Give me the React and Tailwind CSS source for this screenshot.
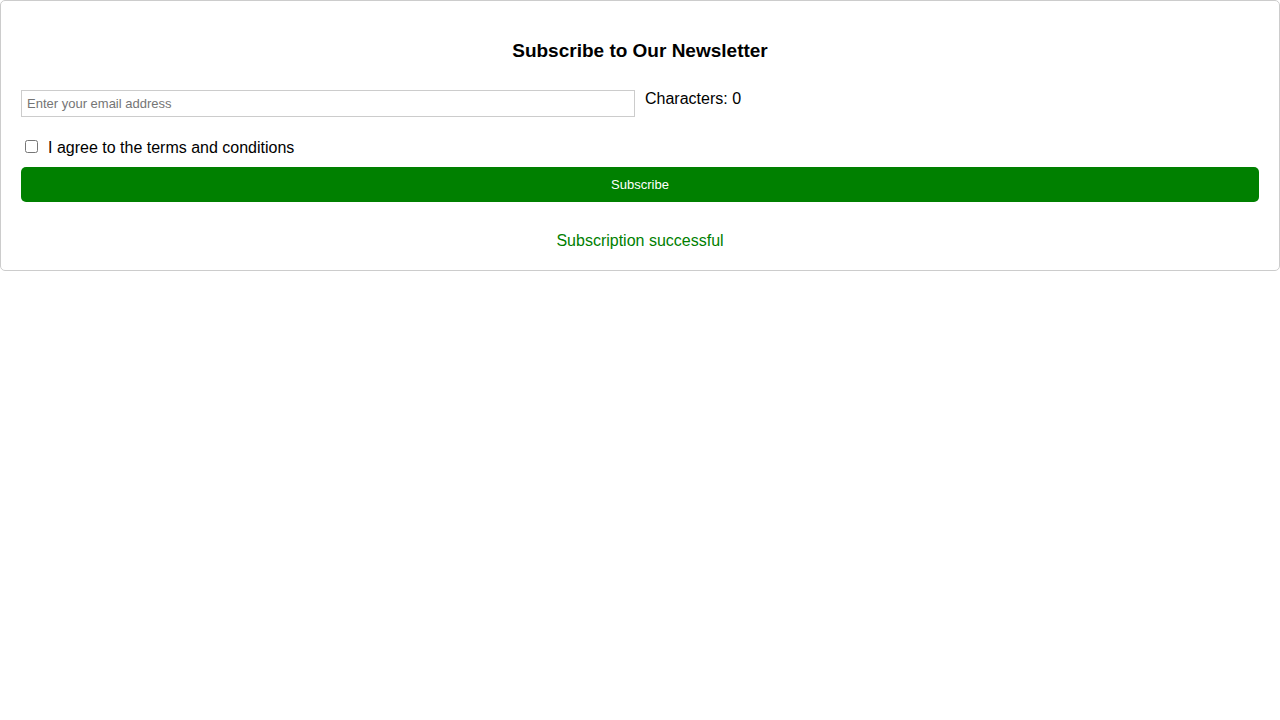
import { useState } from "react";

export default function App() {
  const [email, setEmail] = useState("");
  const [agreed, setAgreed] = useState(false);

  return (
    <form
      className="flex flex-col rounded-[5px] border border-[#cccccc] p-5 font-['Liberation_Sans',Arial,sans-serif] text-base leading-[18px] text-black"
      onSubmit={(event) => event.preventDefault()}
    >
      <h3 className="mt-[19px] mb-[29px] text-center text-[19px] leading-[21px] font-bold">
        Subscribe to Our Newsletter
      </h3>
      <div className="mb-5 grid grid-cols-2 items-start gap-2.5">
        <input
          type="email"
          aria-label="Email address"
          placeholder="Enter your email address"
          value={email}
          onChange={(event) => setEmail(event.target.value)}
          className="min-w-0 border border-[#cccccc] p-[5px] text-[13px] leading-[15px] placeholder:text-[#757575]"
        />
        <span>Characters: {email.length}</span>
      </div>
      <div className="mb-2.5 flex items-baseline gap-2.5 pl-1">
        <input
          id="terms"
          type="checkbox"
          checked={agreed}
          onChange={(event) => setAgreed(event.target.checked)}
          className="my-[3px] size-[13px]"
        />
        <label htmlFor="terms">I agree to the terms and conditions</label>
      </div>
      <button
        type="submit"
        className="rounded-[5px] bg-[#008000] p-2.5 text-[13px] leading-[15px] text-white"
      >
        Subscribe
      </button>
      <p role="status" className="mt-[30px] text-center text-[#008000]">
        Subscription successful
      </p>
    </form>
  );
}
